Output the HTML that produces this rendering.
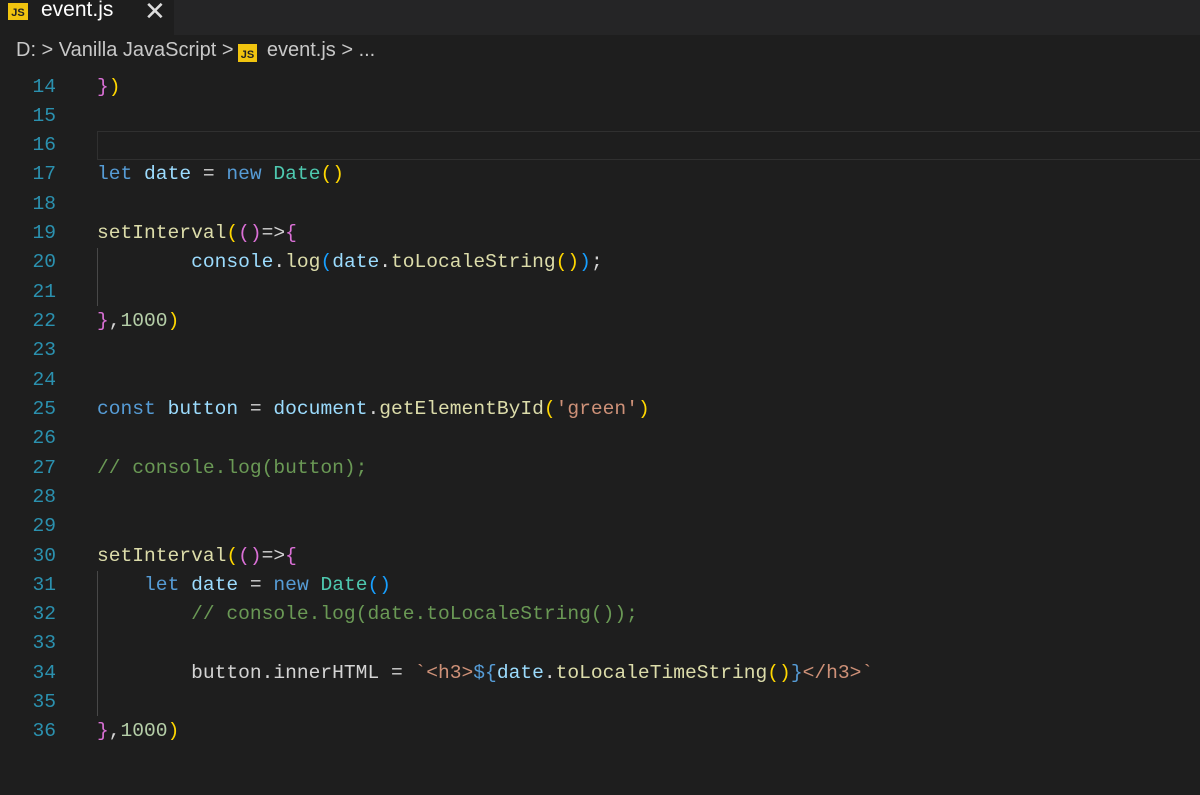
<!DOCTYPE html>
<html><head><meta charset="utf-8"><style>
body{margin:0;width:1200px;height:795px;background:#1e1e1e;overflow:hidden;font-family:"Liberation Sans",sans-serif;position:relative}
.tabbar{position:absolute;left:0;top:0;width:1200px;height:35px;background:#252526}
.tab{position:absolute;left:0;top:0;width:174px;height:35px;background:#1e1e1e}
.js{position:absolute;background:#f1c40f;color:#222;font-weight:bold;font-family:"Liberation Sans",sans-serif;text-align:center}
.tabname{position:absolute;left:41px;top:-2px;color:#fff;font-size:21px}
.x{position:absolute;left:144px;top:-4px;color:#ddd;font-size:26px}
.crumb{position:absolute;left:16px;top:39px;color:#c8c8c8;font-size:20px;white-space:pre}
.code{position:absolute;left:0;top:72.5px;width:1200px;font-family:"Liberation Mono",monospace;font-size:19.6px}
.l{height:29.32px;line-height:29.32px;white-space:pre;position:relative}
.n{position:absolute;left:6px;color:#2b91af;width:50px;text-align:right}
.t{position:absolute;left:97px;color:#d4d4d4}
.cur{position:absolute;left:97px;top:131px;width:1102px;height:27px;border:1px solid #303030;border-right:none}
.g{position:absolute;left:97px;width:1px;background:#484848}
.k{color:#569cd6}.v{color:#9cdcfe}.c{color:#4ec9b0}.f{color:#dcdcaa}.y{color:#ffd700}.p{color:#da70d6}.b{color:#179fff}.s{color:#ce9178}.m{color:#b5cea8}.cm{color:#6a9955}
</style></head><body>
<div class="tabbar"><div class="tab">
<div class="js" style="left:8px;top:3px;width:20px;height:17px;font-size:11px;line-height:20px">JS</div>
<div class="tabname">event.js</div><div class="x">✕</div></div></div>
<div class="crumb">D: &gt; Vanilla JavaScript &gt;      event.js &gt; ...</div>
<div class="js" style="left:238px;top:44px;width:19px;height:18px;font-size:11px;line-height:22px">JS</div>
<div class="cur"></div>
<div class="g" style="top:248px;height:58px"></div>
<div class="g" style="top:571px;height:145px"></div>
<div class="code">
<div class="l"><span class="n">14</span><span class="t"><span class="p">}</span><span class="y">)</span></span></div>
<div class="l"><span class="n">15</span></div>
<div class="l"><span class="n">16</span></div>
<div class="l"><span class="n">17</span><span class="t"><span class="k">let</span> <span class="v">date</span> = <span class="k">new</span> <span class="c">Date</span><span class="y">()</span></span></div>
<div class="l"><span class="n">18</span></div>
<div class="l"><span class="n">19</span><span class="t"><span class="f">setInterval</span><span class="y">(</span><span class="p">()</span>=&gt;<span class="p">{</span></span></div>
<div class="l"><span class="n">20</span><span class="t">        <span class="v">console</span>.<span class="f">log</span><span class="b">(</span><span class="v">date</span>.<span class="f">toLocaleString</span><span class="y">()</span><span class="b">)</span>;</span></div>
<div class="l"><span class="n">21</span></div>
<div class="l"><span class="n">22</span><span class="t"><span class="p">}</span>,<span class="m">1000</span><span class="y">)</span></span></div>
<div class="l"><span class="n">23</span></div>
<div class="l"><span class="n">24</span></div>
<div class="l"><span class="n">25</span><span class="t"><span class="k">const</span> <span class="v">button</span> = <span class="v">document</span>.<span class="f">getElementById</span><span class="y">(</span><span class="s">'green'</span><span class="y">)</span></span></div>
<div class="l"><span class="n">26</span></div>
<div class="l"><span class="n">27</span><span class="t"><span class="cm">// console.log(button);</span></span></div>
<div class="l"><span class="n">28</span></div>
<div class="l"><span class="n">29</span></div>
<div class="l"><span class="n">30</span><span class="t"><span class="f">setInterval</span><span class="y">(</span><span class="p">()</span>=&gt;<span class="p">{</span></span></div>
<div class="l"><span class="n">31</span><span class="t">    <span class="k">let</span> <span class="v">date</span> = <span class="k">new</span> <span class="c">Date</span><span class="b">()</span></span></div>
<div class="l"><span class="n">32</span><span class="t">        <span class="cm">// console.log(date.toLocaleString());</span></span></div>
<div class="l"><span class="n">33</span></div>
<div class="l"><span class="n">34</span><span class="t">        button.innerHTML = <span class="s">`&lt;h3&gt;</span><span class="k">${</span><span class="v">date</span>.<span class="f">toLocaleTimeString</span><span class="y">()</span><span class="k">}</span><span class="s">&lt;/h3&gt;`</span></span></div>
<div class="l"><span class="n">35</span></div>
<div class="l"><span class="n">36</span><span class="t"><span class="p">}</span>,<span class="m">1000</span><span class="y">)</span></span></div>
</div>
</body></html>
